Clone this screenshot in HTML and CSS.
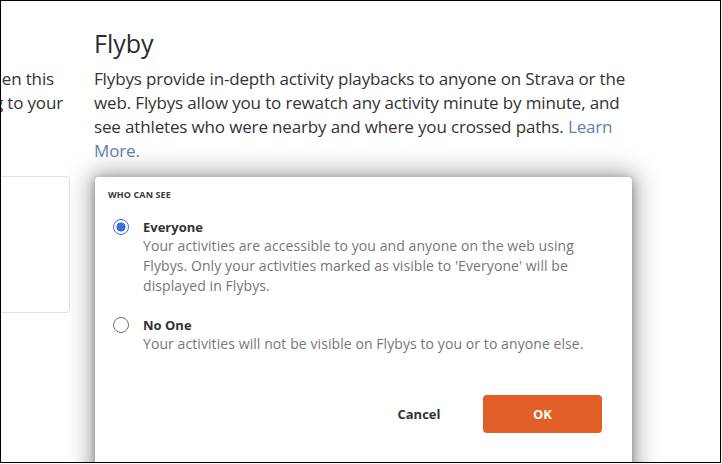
FILE: index.html
```html
<!DOCTYPE html>
<html lang="en">
<head>
<meta charset="utf-8">
<title>Flyby privacy</title>
<link rel="stylesheet" href="styles.css">
</head>
<body>
<div class="frame">
  <div class="page">
    <div class="side">
      <div class="side-text">
        <span class="side-line short">will be visible when this</span>
        <span class="side-line">setting according to your</span>
      </div>
      <div class="side-card"></div>
    </div>
    <div class="main">
      <h2 class="title">Flyby</h2>
      <p class="intro">Flybys provide in-depth activity playbacks to anyone on Strava or the web. Flybys allow you to rewatch any activity minute by minute, and see athletes who were nearby and where you crossed paths. <a class="link" href="#">Learn More.</a></p>
    </div>
  </div>

  <div class="dialog">
    <div class="dialog-label">WHO CAN SEE</div>
    <div class="option first">
      <span class="radio checked"></span>
      <div class="option-body">
        <div class="option-title">Everyone</div>
        <div class="option-desc">Your activities are accessible to you and anyone on the web using Flybys. Only your activities marked as visible to 'Everyone' will be displayed in Flybys.</div>
      </div>
    </div>
    <div class="option second">
      <span class="radio"></span>
      <div class="option-body">
        <div class="option-title">No One</div>
        <div class="option-desc">Your activities will not be visible on Flybys to you or to anyone else.</div>
      </div>
    </div>
    <div class="actions">
      <button class="btn cancel" type="button">Cancel</button>
      <button class="btn ok" type="button">OK</button>
    </div>
  </div>
</div>
</body>
</html>
```
FILE: styles.css
```css
html, body {
  margin: 0;
  padding: 0;
  background: #fff;
}

body {
  font-family: "Open Sans", "Liberation Sans", sans-serif;
  color: #333;
}

.frame {
  position: relative;
  width: 721px;
  height: 463px;
  border: 1px solid #000;
  box-sizing: border-box;
  overflow: hidden;
  background: #fff;
}

.page {
  display: flex;
  padding-top: 26px;
}

.side {
  width: 300px;
  margin-left: -231px;
  padding-top: 40px;
  flex-shrink: 0;
}

.side-text {
  display: flex;
  flex-direction: column;
  align-items: flex-end;
  padding-right: 7px;
  font-size: 17px;
  line-height: 24px;
  letter-spacing: -0.15px;
  color: #333;
}

.side-line {
  white-space: nowrap;
}

.side-line.short {
  margin-right: 9px;
}

.side-card {
  margin-top: 61px;
  height: 137px;
  border: 1px solid #e2e2e2;
  border-radius: 4px;
  box-sizing: border-box;
}

.main {
  margin-left: 24px;
  width: 535px;
}

.title {
  margin: 0;
  font-size: 25px;
  line-height: 32px;
  font-weight: 400;
  color: #2b2b30;
}

.intro {
  margin: 8px 0 0;
  font-size: 17px;
  line-height: 24px;
  letter-spacing: -0.15px;
  color: #333;
}

.link {
  color: #5f82b2;
  text-decoration: none;
}

.dialog {
  position: absolute;
  left: 94px;
  top: 176px;
  width: 537px;
  height: 320px;
  box-sizing: border-box;
  padding: 12px 30px 0 13px;
  background: #fff;
  border-radius: 4px;
  box-shadow: 0 0 24px 4px rgba(0, 0, 0, 0.36), 0 2px 8px rgba(0, 0, 0, 0.3);
}

.dialog-label {
  font-size: 9px;
  line-height: 12px;
  font-weight: 700;
  letter-spacing: 0.1px;
  color: #3a3a3a;
}

.option {
  display: flex;
  gap: 14px;
  padding-left: 5px;
}

.option.first {
  margin-top: 17px;
}

.option.second {
  margin-top: 20px;
}

.radio {
  width: 16px;
  height: 16px;
  margin-top: 1px;
  border: 1.5px solid #707070;
  border-radius: 50%;
  box-sizing: border-box;
  flex-shrink: 0;
  background: #fff;
}

.radio.checked {
  border-color: #3b6fe8;
  background: radial-gradient(circle, #3b6fe8 0 4.3px, #fff 4.8px);
}

.option-title {
  font-size: 13px;
  line-height: 18px;
  font-weight: 700;
  color: #333;
}

.option-desc {
  font-size: 14px;
  line-height: 20px;
  letter-spacing: 0.08px;
  color: #777;
}

.actions {
  display: flex;
  justify-content: flex-end;
  gap: 24px;
  margin-top: 41px;
}

.btn {
  height: 38px;
  border: none;
  border-radius: 4px;
  font-family: "Open Sans", "Liberation Sans", sans-serif;
  font-size: 13px;
  font-weight: 700;
  cursor: pointer;
}

.cancel {
  width: 80px;
  background: transparent;
  color: #333;
}

.ok {
  width: 119px;
  background: #e25e27;
  color: #fff;
}
```
